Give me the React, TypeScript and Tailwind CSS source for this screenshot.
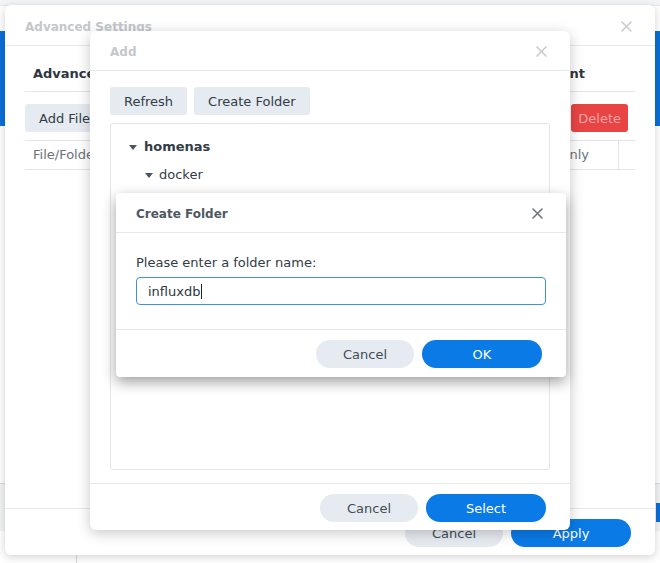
import React from "react";

function CloseX({ color, size = 11 }: { color: string; size?: number }) {
  return (
    <svg width={size} height={size} viewBox="0 0 11 11" fill="none">
      <path d="M1 1L10 10M10 1L1 10" stroke={color} strokeWidth="1.6" strokeLinecap="round" />
    </svg>
  );
}

function Caret() {
  return (
    <svg width="8" height="5" viewBox="0 0 8 5">
      <path d="M0 0H8L4 5Z" fill="#4a5561" />
    </svg>
  );
}

export default function App() {
  return (
    <div
      className="relative w-[660px] h-[563px] overflow-hidden bg-white text-[13px] text-[#414b55]"
      style={{ fontFamily: '"DejaVu Sans", Verdana, sans-serif' }}
    >
      {/* desktop behind */}
      <div className="absolute left-0 top-0 w-[660px] h-[6px] bg-[#f4f5f6] border-b border-[#e8e8e8]" />
      <div className="absolute left-0 top-[31px] w-[6px] h-[95px] bg-[#0a70d8]" />
      <div className="absolute right-0 top-[31px] w-[6px] h-[95px] bg-[#0a70d8]" />
      <div className="absolute left-0 top-[483px] w-[6px] h-[48px] bg-[#f2f3f4] border-t border-[#dcdcdc]" />
      <div className="absolute right-0 top-[483px] w-[6px] h-[48px] bg-[#f2f3f4] border-t border-[#dcdcdc]" />
      <div className="absolute right-0 top-[503px] w-[4px] h-[19px] bg-[#0a70d8]" />
      <div className="absolute left-[76px] top-[555px] w-px h-[8px] bg-[#d8d8d8]" />

      {/* Advanced Settings window */}
      <div className="absolute left-[5px] top-[5px] w-[650px] h-[550px] bg-white rounded-[6px] shadow-[0_2px_10px_rgba(0,0,0,0.18)] flex flex-col">
        <div className="h-[41px] border-b border-[#e6e8ea] flex items-center justify-between pl-[20px] pr-[23px] pt-[3px] shrink-0">
          <span className="text-[12px] font-bold text-[#c4c8cc]">Advanced Settings</span>
          <CloseX color="#c8cbce" />
        </div>
        <div className="flex-1 flex flex-col px-[20px] pt-[10px]">
          <div className="h-[36px] border-b border-[#e3e5e8] flex items-center justify-between pl-[8px] pr-[50px]">
            <span className="font-bold text-[#2e3640]">Advanced Permissions</span>
            <span className="font-bold text-[#2e3640]">Management</span>
          </div>
          <div className="h-[49px] border-b border-[#e3e5e8] flex items-start justify-between pt-[12px] pr-[7px]">
            <div className="h-[28px] px-[14px] pt-[1px] rounded-[3px] bg-[#e6ebf1] flex items-center text-[#333c46]">
              Add File/Folder
            </div>
            <div className="h-[28px] px-[7px] pt-[1px] rounded-[3px] bg-[#e84444] flex items-center text-[#f5a3a3]">
              Delete
            </div>
          </div>
          <div className="h-[29px] border-b border-[#e3e5e8] flex items-center justify-between">
            <span className="pl-[8px] text-[#6b737b]">File/Folder</span>
            <div className="flex h-full items-center">
              <span className="text-[#6b737b] pr-[29px]">Read-only</span>
              <div className="w-px h-full bg-[#e3e5e8]" />
              <div className="w-[16px]" />
            </div>
          </div>
          <div className="flex-1" />
        </div>
        <div className="h-[47px] border-t border-[#e6e8ea] flex items-start justify-end gap-[8px] pt-[10px] pr-[24px] shrink-0">
          <div className="w-[98px] h-[28px] pt-[1px] rounded-full bg-[#e6ebf1] flex items-center justify-center text-[#414b55]">Cancel</div>
          <div className="w-[120px] h-[28px] pt-[1px] rounded-full bg-[#0a7ae6] flex items-center justify-center text-white">Apply</div>
        </div>
      </div>

      {/* Add window */}
      <div className="absolute left-[90px] top-[31px] w-[480px] h-[499px] bg-white rounded-[6px] shadow-[0_3px_14px_rgba(0,0,0,0.22)] flex flex-col">
        <div className="h-[40px] border-b border-[#e6e8ea] flex items-center justify-between pl-[20px] pr-[23px] pt-[2px] shrink-0">
          <span className="text-[12px] font-bold text-[#c4c8cc]">Add</span>
          <CloseX color="#c8cbce" />
        </div>
        <div className="flex-1 flex flex-col px-[20px] pt-[16px] pb-[13px] min-h-0">
          <div className="flex gap-[7px] shrink-0">
            <div className="h-[28px] px-[14px] pt-[1px] rounded-[3px] bg-[#e6ebf1] flex items-center text-[#333c46]">Refresh</div>
            <div className="h-[28px] px-[14px] pt-[1px] rounded-[3px] bg-[#e6ebf1] flex items-center text-[#333c46]">Create Folder</div>
          </div>
          <div className="mt-[8px] flex-1 border border-[#e3e5e8] rounded-[3px] pt-[9px]">
            <div className="h-[28px] flex items-center pl-[18px] gap-[7px]">
              <Caret />
              <span className="font-bold text-[#333c46]">homenas</span>
            </div>
            <div className="h-[28px] flex items-center pl-[34px] gap-[6px]">
              <Caret />
              <span className="text-[#333c46]">docker</span>
            </div>
          </div>
        </div>
        <div className="h-[47px] border-t border-[#e6e8ea] flex items-start justify-end gap-[8px] pt-[10px] pr-[24px] shrink-0">
          <div className="w-[98px] h-[28px] pt-[1px] rounded-full bg-[#e6ebf1] flex items-center justify-center text-[#414b55]">Cancel</div>
          <div className="w-[120px] h-[28px] pt-[1px] rounded-full bg-[#0a7ae6] flex items-center justify-center text-white">Select</div>
        </div>
      </div>

      {/* Create Folder dialog */}
      <div className="absolute left-[116px] top-[193px] w-[450px] h-[184px] bg-white rounded-[4px] shadow-[0_5px_14px_rgba(0,0,0,0.38)] flex flex-col">
        <div className="h-[40px] border-b border-[#e6e8ea] flex items-center justify-between pl-[20px] pr-[23px] pt-[2px] shrink-0">
          <span className="text-[12px] font-bold text-[#4d5863]">Create Folder</span>
          <CloseX color="#6e7780" />
        </div>
        <div className="flex-1 flex flex-col px-[20px] pt-[21px]">
          <div className="h-[18px] leading-[18px] text-[#333c46]">Please enter a folder name:</div>
          <div className="mt-[5px] h-[28px] rounded-[4px] border border-[#3d8fe0] flex items-center pl-[11px] pt-[1px] text-[#2e3640]">
            <span>influxdb</span>
            <span className="w-px h-[15px] bg-[#222] ml-[1px]" />
          </div>
        </div>
        <div className="h-[48px] border-t border-[#e6e8ea] flex items-start justify-end gap-[8px] pt-[10px] pr-[24px] shrink-0">
          <div className="w-[98px] h-[28px] pt-[1px] rounded-full bg-[#e6ebf1] flex items-center justify-center text-[#414b55]">Cancel</div>
          <div className="w-[120px] h-[28px] pt-[1px] rounded-full bg-[#0a7ae6] flex items-center justify-center text-white">OK</div>
        </div>
      </div>
    </div>
  );
}
